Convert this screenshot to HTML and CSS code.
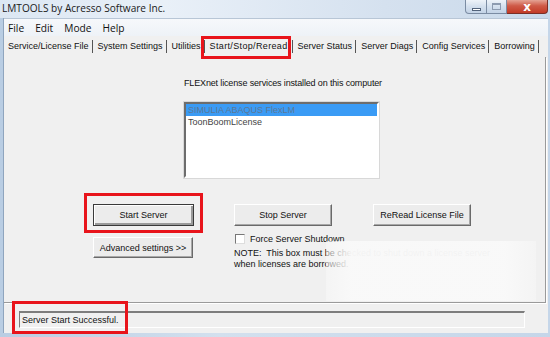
FILE: index.html
```html
<!DOCTYPE html>
<html lang="en">
<head>
    <meta charset="UTF-8">
    <title>LMTOOLS</title>
    <link rel="stylesheet" href="styles.css">
</head>
<body>
    <div class="window">
        <div class="titlebar">
            <span class="title">LMTOOLS by Acresso Software Inc.</span>
            <div class="caption">
                <span class="cap cap-min"><i></i></span>
                <span class="cap cap-max"><i></i></span>
                <span class="cap cap-close">x</span>
            </div>
        </div>

        <div class="client">
            <div class="menubar">
                <span>File</span>
                <span>Edit</span>
                <span>Mode</span>
                <span>Help</span>
            </div>

            <div class="tabs">
                <span class="tab">Service/License File</span>
                <span class="tab">System Settings</span>
                <span class="tab">Utilities</span>
                <span class="tab active">Start/Stop/Reread</span>
                <span class="tab">Server Status</span>
                <span class="tab">Server Diags</span>
                <span class="tab">Config Services</span>
                <span class="tab">Borrowing</span>
            </div>

            <div class="panel">
                <div class="services">
                    <p class="label">FLEXnet license services installed on this computer</p>
                    <div class="listbox">
                        <div class="item selected">SIMULIA ABAQUS FlexLM</div>
                        <div class="item">ToonBoomLicense</div>
                    </div>
                </div>

                <div class="controls">
                    <div class="col col-start">
                        <button class="btn btn-default">Start Server</button>
                        <button class="btn btn-adv">Advanced settings &gt;&gt;</button>
                    </div>
                    <div class="col col-stop">
                        <button class="btn">Stop Server</button>
                        <label class="check"><span class="box"></span>Force Server Shutdown</label>
                        <p class="note">NOTE:&nbsp; This box must be checked to shut down a license server<br>when licenses are borrowed.</p>
                    </div>
                    <div class="col col-reread">
                        <button class="btn">ReRead License File</button>
                    </div>
                </div>

                <!-- watermark left on the screenshot -->
                <div class="watermark"></div>
            </div>

            <div class="statusbar">
                <div class="status">Server Start Successful.</div>
            </div>
        </div>

        <!-- red annotation boxes -->
        <div class="mark mark-tab"></div>
        <div class="mark mark-start"></div>
        <div class="mark mark-status"></div>
    </div>
</body>
</html>
```

FILE: styles.css
```css
* {
    margin: 0;
    padding: 0;
    box-sizing: border-box;
}
body {
    width: 550px;
    height: 337px;
    overflow: hidden;
    font-family: "Liberation Sans", Arial, sans-serif;
    font-size: 9px;
    color: #111;
}
.window {
    position: relative;
    width: 550px;
    height: 337px;
    display: flex;
    flex-direction: column;
    background: linear-gradient(90deg, #b9cde3, #d3e0ee 40%, #c5d6e9);
    padding: 0 2px 4px 3px;
}

/* title bar */
.titlebar {
    height: 18px;
    margin: 0 -2px 0 -3px;
    display: flex;
    align-items: flex-start;
    justify-content: space-between;
    background: linear-gradient(90deg, #dce7f3 0%, #e9f0f8 30%, #d5e1ef 70%, #c9d9ea 100%);
}
.title {
    font-family: "Open Sans", "Noto Sans", sans-serif;
    font-size: 10.1px;
    line-height: 15px;
    padding: 1px 0 0 2px;
    color: #1a1a1a;
}
.caption {
    display: flex;
    margin-right: 2px;
}
.cap {
    height: 14px;
    border: 1px solid #7b8ca3;
    border-top: 0;
    display: flex;
    align-items: center;
    justify-content: center;
    background: linear-gradient(#eef3f9, #d4e0ee 50%, #c3d3e6);
}
.cap-min {
    width: 22px;
    border-radius: 0 0 0 4px;
}
.cap-min i {
    width: 9px;
    height: 3px;
    margin-top: 5px;
    background: #fff;
    border: 1px solid #52637b;
}
.cap-max {
    width: 20px;
    border-left: 0;
}
.cap-max i {
    width: 9px;
    height: 7px;
    border: 1px solid #8d9bb0;
    border-top-width: 2px;
}
.cap-close {
    width: 41px;
    border-left: 0;
    border-color: #7a2f26;
    border-radius: 0 0 4px 0;
    background: linear-gradient(#e4a394, #cf5a47 45%, #c23a26);
    color: #fff;
    font-family: "DejaVu Sans", sans-serif;
    font-weight: bold;
    font-size: 12px;
    line-height: 12px;
}

/* client area */
.client {
    flex: 1;
    display: flex;
    flex-direction: column;
    background: #f0f0f0;
    border-left: 1px solid #8fa5be;
}
.menubar {
    height: 18px;
    display: flex;
    align-items: center;
    gap: 11px;
    padding-left: 4px;
    background: linear-gradient(#f6f8fb, #eef2f7);
    border-top: 1px solid #b8c6d6;
    font-family: "Open Sans", "Noto Sans", sans-serif;
    font-size: 10.2px;
    color: #111;
}
.tabs {
    height: 21px;
    display: flex;
    align-items: center;
    padding-left: 4px;
    background: #f0f0f0;
}
.tab {
    padding: 0 3px 0 0;
    margin-right: 5px;
    line-height: 13px;
    border-right: 1px solid #555;
    white-space: nowrap;
}
.tab.active {
    letter-spacing: 0.35px;
    padding-right: 4px;
}

.panel {
    position: relative;
    height: 246px;
    margin-right: 2px;
    border-right: 1px solid #9a9a9a;
    border-bottom: 1px solid #9a9a9a;
    box-shadow: 1px 1px 0 #fff;
    background: #f0f0f0;
}
.services {
    padding: 20px 0 0 180px;
}
.label {
    line-height: 12px;
    height: 12px;
    letter-spacing: -0.15px;
}
.listbox {
    margin-top: 13px;
    width: 195px;
    height: 76px;
    background: #fff;
    border: 2px solid #fff;
    border-top-color: #6d6d6d;
    border-left-color: #6d6d6d;
    box-shadow: 0 0 0 1px #d8d8d8;
}
.item {
    height: 12px;
    line-height: 12px;
    padding-left: 2px;
    color: #444;
}
.item.selected {
    background: #3a9bf5;
    color: #5d7896;
}

.controls {
    display: flex;
    margin-top: 26px;
    padding-left: 89px;
}
.col {
    display: flex;
    flex-direction: column;
}
.col-start {
    width: 101px;
}
.col-stop {
    margin-left: 40px;
    width: 139px;
}
.btn {
    font-family: inherit;
    font-size: 9px;
    color: #111;
    height: 22px;
    width: 98px;
    background: #ececec;
    border: 1px solid;
    border-color: #fff #6a6a6a #6a6a6a #fff;
    box-shadow: inset -1px -1px 0 #a8a8a8;
}
.btn-default {
    width: 101px;
    border: 1px solid #3a3a3a;
    box-shadow: inset 1px 1px 0 #fff, inset -2px -2px 0 #9a9a9a;
}
.btn-adv {
    width: 100px;
    height: 21px;
    margin-top: 11px;
}
.check {
    display: flex;
    align-items: center;
    margin-top: 7px;
    height: 11px;
    white-space: nowrap;
}
.box {
    width: 10px;
    height: 10px;
    margin: 0 5px 0 1px;
    background: #fff;
    border: 1px solid #777;
    border-right-color: #ddd;
    border-bottom-color: #ddd;
}
.note {
    margin-top: 4px;
    line-height: 11px;
    white-space: nowrap;
}
.watermark {
    position: absolute;
    left: 322px;
    top: 184px;
    width: 210px;
    height: 60px;
    background: linear-gradient(90deg, rgba(249, 249, 249, 0.5), rgba(249, 249, 249, 0.97) 12%, rgba(249, 249, 249, 0.97) 85%, rgba(248, 248, 248, 0.5));
}

/* status bar */
.statusbar {
    flex: 1;
    padding: 8px 23px 0 15px;
}
.status {
    height: 17px;
    line-height: 15px;
    padding-left: 2px;
    border: 1px solid #fff;
    border-top: 2px solid #7d7d7d;
    border-left: 1px solid #7d7d7d;
}

/* red annotation boxes */
.mark {
    position: absolute;
    border: 3px solid #e8141b;
}
.mark-tab {
    left: 201px;
    top: 36px;
    width: 90px;
    height: 23px;
}
.mark-start {
    left: 84px;
    top: 193px;
    width: 119px;
    height: 40px;
}
.mark-status {
    left: 12px;
    top: 301px;
    width: 116px;
    height: 33px;
}
```
